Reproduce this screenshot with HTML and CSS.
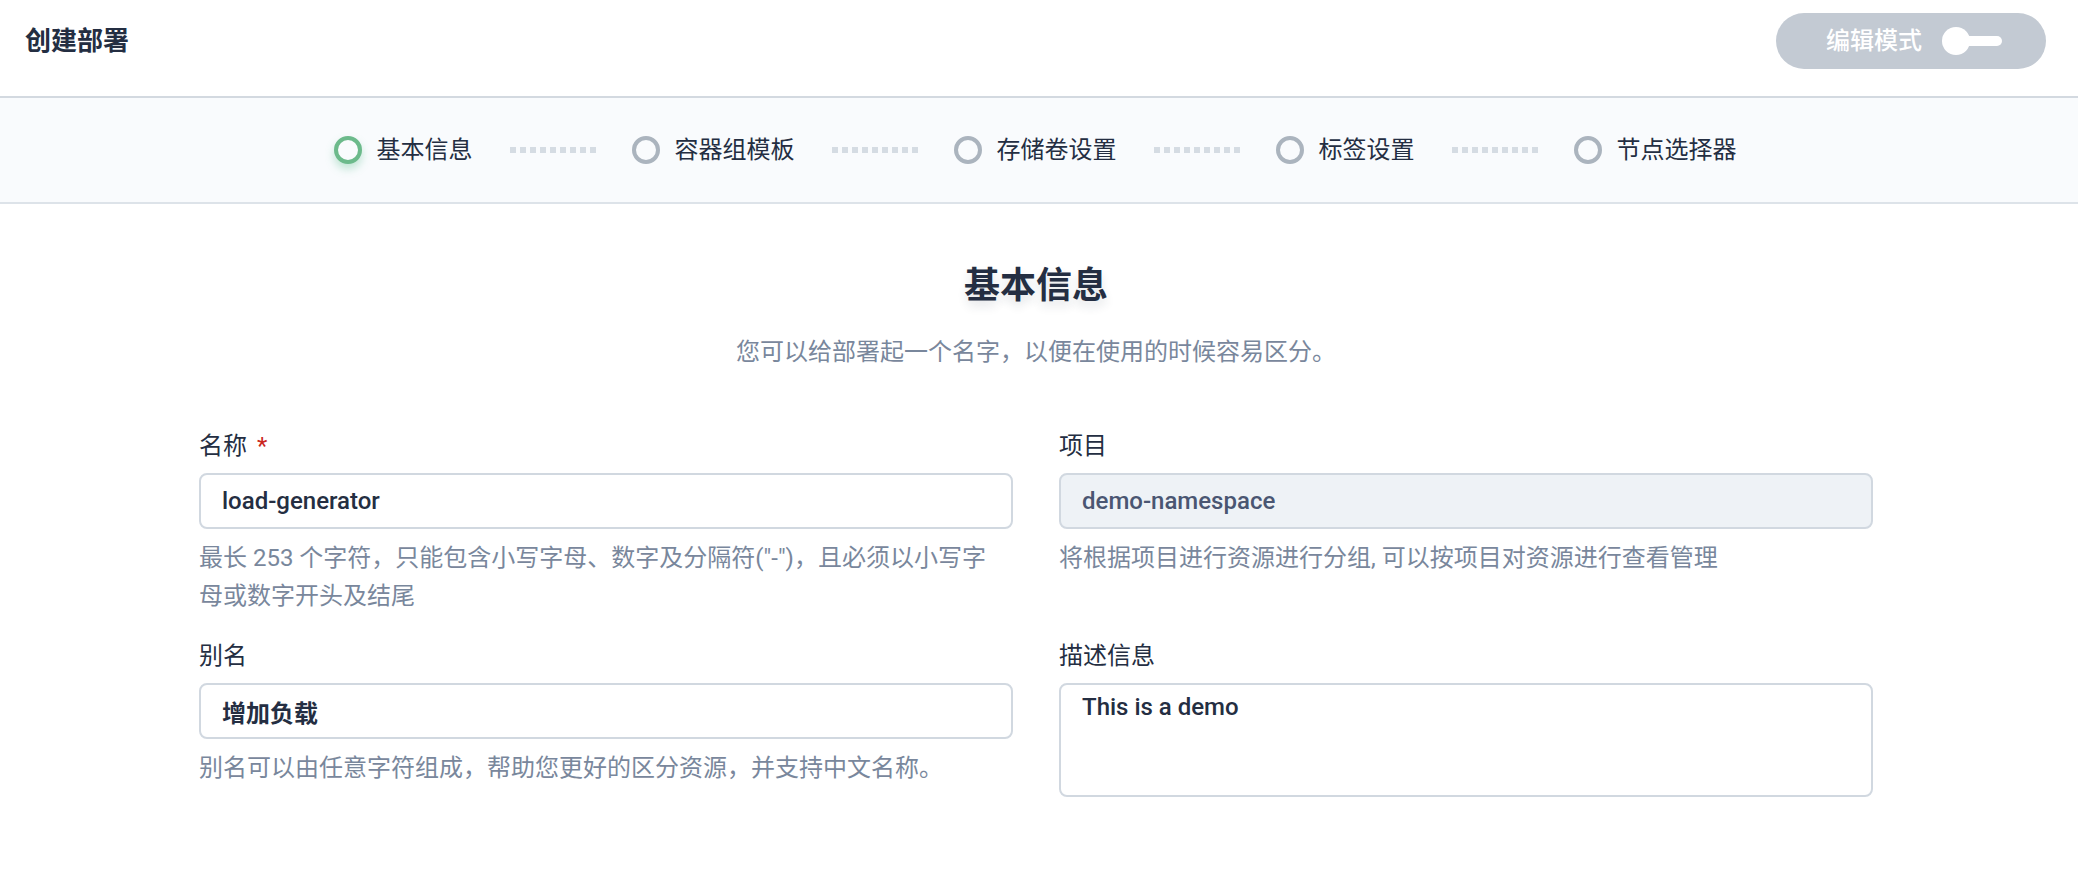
FILE: index.html
```html
<!DOCTYPE html>
<html lang="zh-CN">
<head>
<meta charset="utf-8">
<title>创建部署</title>
<link rel="stylesheet" href="styles.css">
</head>
<body>
<header class="header">
  <h1 class="page-title">创建部署</h1>
  <div class="mode-pill">
    <span class="mode-text">编辑模式</span>
    <span class="toggle"><span class="toggle-knob"></span><span class="toggle-bar"></span></span>
  </div>
</header>
<nav class="steps">
  <div class="step"><span class="step-dot active"></span><span class="step-label">基本信息</span></div>
  <span class="step-dash"></span>
  <div class="step"><span class="step-dot"></span><span class="step-label">容器组模板</span></div>
  <span class="step-dash"></span>
  <div class="step"><span class="step-dot"></span><span class="step-label">存储卷设置</span></div>
  <span class="step-dash"></span>
  <div class="step"><span class="step-dot"></span><span class="step-label">标签设置</span></div>
  <span class="step-dash"></span>
  <div class="step"><span class="step-dot"></span><span class="step-label">节点选择器</span></div>
</nav>
<main class="main">
  <h2 class="section-title">基本信息</h2>
  <p class="section-desc">您可以给部署起一个名字，以便在使用的时候容易区分。</p>
  <form class="form">
    <div class="field">
      <label class="field-label">名称<span class="required">*</span></label>
      <input class="field-input" type="text" value="load-generator">
      <p class="field-hint wrap-hint">最长 253 个字符，只能包含小写字母、数字及分隔符("-")，且必须以小写字母或数字开头及结尾</p>
    </div>
    <div class="field">
      <label class="field-label">项目</label>
      <input class="field-input disabled" type="text" value="demo-namespace" disabled>
      <p class="field-hint">将根据项目进行资源进行分组, 可以按项目对资源进行查看管理</p>
    </div>
    <div class="field">
      <label class="field-label">别名</label>
      <input class="field-input cjk-value" type="text" value="增加负载">
      <p class="field-hint">别名可以由任意字符组成，帮助您更好的区分资源，并支持中文名称。</p>
    </div>
    <div class="field">
      <label class="field-label">描述信息</label>
      <textarea class="field-textarea">This is a demo</textarea>
    </div>
  </form>
</main>
</body>
</html>
```
FILE: styles.css
```css
* { box-sizing: border-box; }
html, body { margin: 0; padding: 0; background: #ffffff; }
body {
  font-family: Roboto, "Noto Sans CJK SC", sans-serif;
  color: #242e42;
  width: 2078px;
}

.header {
  height: 98px;
  padding: 0 32px 14px 25px;
  display: flex;
  align-items: center;
  justify-content: space-between;
  border-bottom: 2px solid #d3d9e0;
}
.page-title {
  margin: 0;
  font-size: 26px;
  line-height: 32px;
  font-weight: 700;
  color: #242e42;
}
.mode-pill {
  width: 270px;
  height: 56px;
  border-radius: 28px;
  background: #c3cad3;
  display: flex;
  align-items: center;
  padding-left: 50px;
}
.mode-text {
  font-size: 24px;
  line-height: 32px;
  color: #ffffff;
  font-weight: 500;
}
.toggle {
  display: flex;
  align-items: center;
  margin-left: 20px;
}
.toggle-knob {
  width: 28px;
  height: 28px;
  border-radius: 50%;
  background: #ffffff;
  position: relative;
  z-index: 1;
}
.toggle-bar {
  width: 38px;
  height: 10px;
  border-radius: 5px;
  background: #ffffff;
  margin-left: -6px;
}

.steps {
  height: 106px;
  padding-right: 8px;
  background: #f9fbfd;
  border-bottom: 2px solid #dde3e9;
  display: flex;
  align-items: center;
  justify-content: center;
}
.step {
  display: flex;
  align-items: center;
}
.step-dot {
  width: 28px;
  height: 28px;
  border-radius: 50%;
  border: 4px solid #abb4be;
  background: #f9fbfd;
}
.step-dot.active {
  border-color: #6cba8b;
  box-shadow: 0 5px 8px rgba(85, 188, 138, 0.35);
}
.step-label {
  margin-left: 15px;
  font-size: 24px;
  line-height: 32px;
  color: #242e42;
}
.step-dash {
  width: 86px;
  height: 6px;
  margin: 0 36px 0 37px;
  background: repeating-linear-gradient(to right, #d5dce3 0 6px, transparent 6px 10px);
}

.main {
  padding: 58px 6px 40px 0;
}
.section-title {
  margin: 0;
  text-align: center;
  font-size: 36px;
  line-height: 48px;
  font-weight: 700;
  color: #242e42;
  text-shadow: 0 6px 10px rgba(36, 46, 66, 0.12);
}
.section-desc {
  margin: 26px 0 0;
  text-align: center;
  font-size: 24px;
  line-height: 32px;
  color: #79879c;
}

.form {
  width: 1674px;
  margin: 62px auto 0;
  display: grid;
  grid-template-columns: 1fr 1fr;
  column-gap: 46px;
  row-gap: 25px;
}
.field { display: flex; flex-direction: column; }
.field-label {
  font-size: 24px;
  line-height: 32px;
  margin-bottom: 11px;
  color: #242e42;
}
.required {
  color: #ca2621;
  margin-left: 10px;
}
.field-input,
.field-textarea {
  width: 100%;
  border: 2px solid #d1d8e0;
  border-radius: 8px;
  background: #ffffff;
  font-family: Roboto, "Noto Sans CJK SC", sans-serif;
  font-size: 24px;
  font-weight: 500;
  color: #242e42;
  outline: none;
}
.field-input {
  height: 56px;
  padding: 0 21px;
  line-height: 32px;
}
.field-input.cjk-value { font-weight: 700; }
.field-input.disabled {
  background: #eef2f6;
  color: #4a5672;
  -webkit-text-fill-color: #4a5672;
  opacity: 1;
}
.field-textarea {
  height: 114px;
  padding: 6px 21px;
  line-height: 32px;
  resize: none;
  display: block;
}
.field-hint {
  margin: 10px 0 0;
  font-size: 24px;
  line-height: 38px;
  color: #79879c;
}
.wrap-hint {
  padding-right: 10px;
}
```
